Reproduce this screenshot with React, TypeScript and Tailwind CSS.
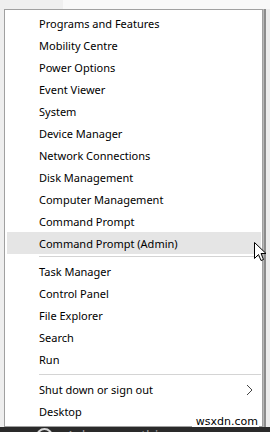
import React from "react";

const groupA = [
  "Programs and Features",
  "Mobility Centre",
  "Power Options",
  "Event Viewer",
  "System",
  "Device Manager",
  "Network Connections",
  "Disk Management",
  "Computer Management",
  "Command Prompt",
  "Command Prompt (Admin)",
];

const groupB = ["Task Manager", "Control Panel", "File Explorer", "Search", "Run"];

function Item({ label, active, arrow }: { label: string; active?: boolean; arrow?: boolean }) {
  return (
    <div
      className={`h-[22px] ml-[2px] mr-[1px] pl-[32px] pr-[8px] flex items-center justify-between text-[11px] text-black ${
        active ? "bg-[#e5e5e5]" : ""
      }`}
    >
      <span className="leading-none">{label}</span>
      {arrow && (
        <svg width="7" height="12" viewBox="0 0 7 12" className="mt-[1px]">
          <polyline points="1,1 6,6 1,11" fill="none" stroke="#444" strokeWidth="1" />
        </svg>
      )}
    </div>
  );
}

export default function App() {
  return (
    <div
      className="relative w-[270px] h-[432px] overflow-hidden bg-[#f0f0f0] flex flex-col"
      style={{ fontFamily: '"Noto Sans", "Liberation Sans", sans-serif' }}
    >
      {/* top strip */}
      <div className="flex h-[9px] shrink-0">
        <div className="w-[63px] bg-[#efefef]" />
        <div className="flex-1 bg-[#f8f8f8]" />
      </div>

      <div className="flex flex-1">
        <div className="w-[4px] bg-[#eeeeee]" />
        {/* menu */}
        <div className="w-[259px] h-[418px] border border-[#a0a0a0] bg-white pt-[2px] pb-[4px] flex flex-col relative">
          {groupA.map((l, i) => (
            <Item key={l} label={l} active={i === groupA.length - 1} />
          ))}
          <div className="h-[6px] flex items-start pt-[2px]">
            <div className="h-px flex-1 ml-[34px] mr-[1px] bg-[#d4d4d4]" />
          </div>
          {groupB.map((l) => (
            <Item key={l} label={l} />
          ))}
          <div className="h-[8px] flex items-start pt-[4px]">
            <div className="h-px flex-1 ml-[34px] mr-[1px] bg-[#d4d4d4]" />
          </div>
          <Item label="Shut down or sign out" arrow />
          <Item label="Desktop" />

          {/* watermark */}
          <div
            className="absolute right-[3px] bottom-[-2px] bg-white pl-[4px] pr-[1px] text-[11px] leading-[13px] text-black whitespace-nowrap"
            style={{ fontFamily: '"DejaVu Sans", sans-serif' }}
          >
            wsxdn.com
          </div>
        </div>
        {/* shadow */}
        <div className="flex">
          <div className="w-[1px] bg-[#b8b8b8]" />
          <div className="w-[2px] bg-[#8c8c8c]" />
          <div className="w-[4px] bg-[#ececec]" />
        </div>
      </div>

      {/* taskbar */}
      <div className="h-[5px] shrink-0 bg-[#2a2a2a] relative overflow-hidden">
        <div className="absolute left-[36px] top-[1px] w-[17px] h-[17px] rounded-full border-2 border-[#d8d8d8]" />
        <div className="absolute left-[66px] top-[1px] text-[14px] leading-[16px] text-[#9a9a9a]">Ask me anything</div>
      </div>

      {/* cursor */}
      <svg
        className="absolute left-[254px] top-[242px]"
        width="13"
        height="20"
        viewBox="0 0 13 20"
      >
        <path
          d="M0.5 0.5 L0.5 16.5 L4.5 12.5 L7 18.5 L9.5 17.5 L7 11.5 L12 11.5 Z"
          fill="white"
          stroke="black"
          strokeWidth="1"
          strokeLinejoin="miter"
        />
      </svg>
    </div>
  );
}
